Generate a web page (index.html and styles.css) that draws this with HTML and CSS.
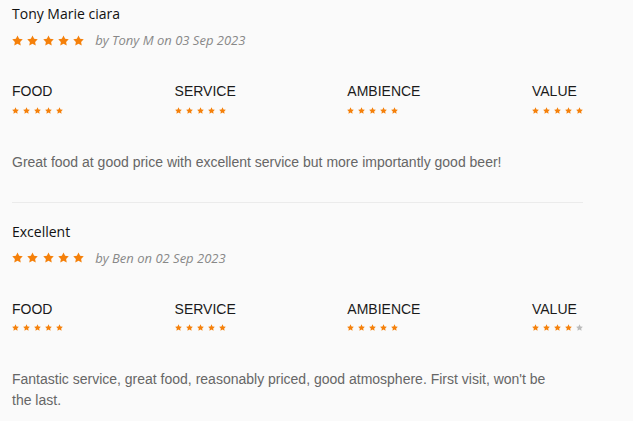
FILE: index.html
```html
<!DOCTYPE html>
<html lang="en">
<head>
  <meta charset="UTF-8">
  <title>Reviews</title>
  <link rel="stylesheet" href="styles.css">
</head>
<body>

  <!-- star sprite -->
  <svg class="sprite" xmlns="http://www.w3.org/2000/svg">
    <symbol id="star" viewBox="0 0 20 19.3">
      <polygon points="10,0.6 12.94,6.55 19.51,7.51 14.76,12.15 15.88,18.69 10,15.6 4.12,18.69 5.24,12.15 0.49,7.51 7.06,6.55" stroke-linejoin="round"/>
    </symbol>
  </svg>

  <div class="reviews">

    <!-- REVIEW 1 -->
    <div class="review">
      <h3 class="review-title">Tony Marie ciara</h3>
      <div class="review-meta">
        <div class="stars big">
          <svg><use href="#star"/></svg><svg><use href="#star"/></svg><svg><use href="#star"/></svg><svg><use href="#star"/></svg><svg><use href="#star"/></svg>
        </div>
        <span class="by">by Tony M on 03 Sep 2023</span>
      </div>
      <div class="ratings">
        <div class="rating">
          <div class="rating-label">FOOD</div>
          <div class="stars small"><svg><use href="#star"/></svg><svg><use href="#star"/></svg><svg><use href="#star"/></svg><svg><use href="#star"/></svg><svg><use href="#star"/></svg></div>
        </div>
        <div class="rating">
          <div class="rating-label">SERVICE</div>
          <div class="stars small"><svg><use href="#star"/></svg><svg><use href="#star"/></svg><svg><use href="#star"/></svg><svg><use href="#star"/></svg><svg><use href="#star"/></svg></div>
        </div>
        <div class="rating">
          <div class="rating-label">AMBIENCE</div>
          <div class="stars small"><svg><use href="#star"/></svg><svg><use href="#star"/></svg><svg><use href="#star"/></svg><svg><use href="#star"/></svg><svg><use href="#star"/></svg></div>
        </div>
        <div class="rating">
          <div class="rating-label">VALUE</div>
          <div class="stars small"><svg><use href="#star"/></svg><svg><use href="#star"/></svg><svg><use href="#star"/></svg><svg><use href="#star"/></svg><svg><use href="#star"/></svg></div>
        </div>
      </div>
      <p class="review-text">Great food at good price with excellent service but more importantly good beer!</p>
    </div>

    <!-- REVIEW 2 -->
    <div class="review">
      <h3 class="review-title">Excellent</h3>
      <div class="review-meta">
        <div class="stars big">
          <svg><use href="#star"/></svg><svg><use href="#star"/></svg><svg><use href="#star"/></svg><svg><use href="#star"/></svg><svg><use href="#star"/></svg>
        </div>
        <span class="by">by Ben on 02 Sep 2023</span>
      </div>
      <div class="ratings">
        <div class="rating">
          <div class="rating-label">FOOD</div>
          <div class="stars small"><svg><use href="#star"/></svg><svg><use href="#star"/></svg><svg><use href="#star"/></svg><svg><use href="#star"/></svg><svg><use href="#star"/></svg></div>
        </div>
        <div class="rating">
          <div class="rating-label">SERVICE</div>
          <div class="stars small"><svg><use href="#star"/></svg><svg><use href="#star"/></svg><svg><use href="#star"/></svg><svg><use href="#star"/></svg><svg><use href="#star"/></svg></div>
        </div>
        <div class="rating">
          <div class="rating-label">AMBIENCE</div>
          <div class="stars small"><svg><use href="#star"/></svg><svg><use href="#star"/></svg><svg><use href="#star"/></svg><svg><use href="#star"/></svg><svg><use href="#star"/></svg></div>
        </div>
        <div class="rating">
          <div class="rating-label">VALUE</div>
          <div class="stars small"><svg><use href="#star"/></svg><svg><use href="#star"/></svg><svg><use href="#star"/></svg><svg><use href="#star"/></svg><svg class="off"><use href="#star"/></svg></div>
        </div>
      </div>
      <p class="review-text">Fantastic service, great food, reasonably priced, good atmosphere. First visit, won't be<br>the last.</p>
    </div>

  </div>

</body>
</html>
```

FILE: styles.css
```css
body {
  margin: 0;
  background: #fafafa;
  font-family: "Liberation Sans", Arial, sans-serif;
}

.sprite {
  display: none;
}

.reviews {
  width: 571px;
  margin-left: 12px;
}

.review {
  padding: 19px 0 29px;
  border-bottom: 1px solid #ebebeb;
}

.review:first-child {
  padding-top: 4px;
}

.review:last-child {
  border-bottom: none;
}

.review-title {
  margin: 0;
  font-family: "Open Sans", sans-serif;
  font-size: 14px;
  font-weight: normal;
  line-height: 20px;
  color: #111;
}

.review-meta {
  display: flex;
  align-items: center;
  gap: 11px;
  margin-top: 9px;
  height: 14px;
}

.by {
  font-family: "Open Sans", sans-serif;
  font-style: italic;
  font-size: 13px;
  color: #888;
}

/* STARS */
.stars {
  display: flex;
  color: #f5800a;
}

.stars svg {
  display: block;
  fill: currentColor;
}

.stars.big {
  gap: 4.3px;
}

.stars.big svg {
  width: 11px;
  height: 11px;
}

.stars.small {
  gap: 4px;
  margin-top: 7.5px;
}

.stars.small svg {
  width: 7px;
  height: 7px;
}

.stars svg.off {
  color: #bbb;
}

/* RATINGS */
.ratings {
  display: flex;
  justify-content: space-between;
  margin-top: 36px;
}

.rating-label {
  font-size: 14px;
  line-height: 16px;
  color: #1a1a1a;
}

.review-text {
  margin: 38px 0 0;
  font-size: 14px;
  line-height: 21px;
  color: #666;
}
```
